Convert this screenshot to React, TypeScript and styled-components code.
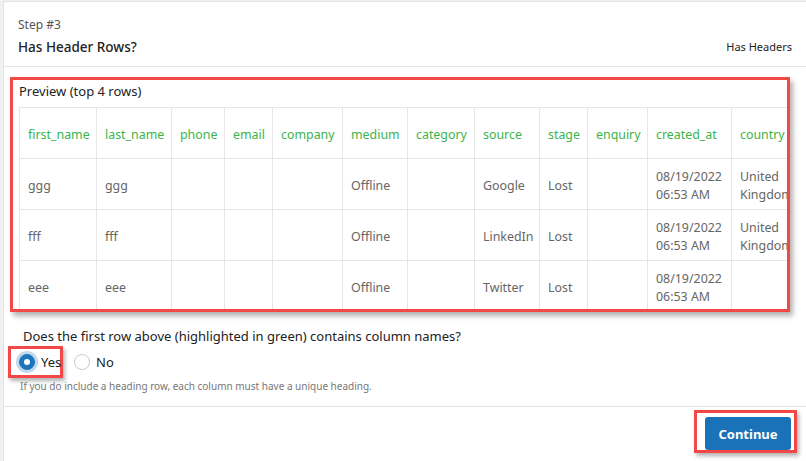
import React from "react";
import styled, { createGlobalStyle } from "styled-components";

const Global = createGlobalStyle`
  html, body { margin: 0; padding: 0; }
  body {
    background: #f1f1f1;
    font-family: "Noto Sans", "Open Sans", Arial, sans-serif;
    overflow: hidden;
  }
`;

const Card = styled.div`
  margin: 1px 0 0 3px;
  height: 460px;
  background: #fff;
  border-top: 1px solid #e4e4e4;
  border-left: 1px solid #e4e4e4;
  box-sizing: border-box;
  display: flex;
  flex-direction: column;
`;

const Header = styled.div`
  display: flex;
  justify-content: space-between;
  align-items: flex-end;
  padding: 13px 14px 10px 14px;
  border-bottom: 1px solid #e4e4e4;
  height: 65px;
  box-sizing: border-box;
`;

const TitleBlock = styled.div`
  display: flex;
  flex-direction: column;
  gap: 4px;
`;

const StepLabel = styled.div`
  font-size: 12px;
  line-height: 18px;
  color: #555;
`;

const Title = styled.div`
  font-size: 13.5px;
  line-height: 18px;
  color: #222;
  font-weight: 500;
`;

const HeaderNote = styled.div`
  font-size: 11px;
  line-height: 14px;
  color: #222;
  margin-bottom: 2px;
`;

const Body = styled.div`
  padding: 10px 0 0 6px;
  flex: 0 0 auto;
  height: 340px;
  box-sizing: border-box;
  border-bottom: 1px solid #e4e4e4;
`;

const Highlight = styled.div`
  border: 3px solid #f24848;
  box-shadow: 3px 4px 5px rgba(0, 0, 0, 0.3);
  width: 780px;
  height: 235px;
  box-sizing: border-box;
  overflow: hidden;
  padding: 2px 0 0 6px;
`;

const PreviewLabel = styled.div`
  font-size: 13px;
  line-height: 18px;
  color: #222;
  margin-bottom: 7px;
`;

const Table = styled.table`
  border-collapse: collapse;
  table-layout: fixed;
  width: 792px;
`;

const Th = styled.th`
  border: 1px solid #e6e6e6;
  height: 47px;
  padding: 3px 7px 0 8px;
  text-align: left;
  font-weight: 400;
  font-size: 12.4px;
  line-height: 18px;
  color: #3cb44b;
  vertical-align: middle;
  white-space: nowrap;
  overflow: hidden;
`;

const Td = styled.td`
  border: 1px solid #e6e6e6;
  height: 47px;
  padding: 3px 0 0 8px;
  font-size: 12.4px;
  line-height: 18px;
  color: #666;
  vertical-align: middle;
  white-space: pre-line;
  overflow: hidden;
`;

const Question = styled.div`
  font-size: 13px;
  line-height: 18px;
  color: #222;
  margin: 15px 0 0 13px;
`;

const RadioRow = styled.div`
  display: flex;
  align-items: center;
  margin: 1px 0 0 -2px;
  height: 32px;
`;

const Annotated = styled.div`
  border: 3px solid #f24848;
  box-shadow: 2px 3px 4px rgba(0, 0, 0, 0.3);
  box-sizing: border-box;
  width: 55px;
  height: 32px;
  display: flex;
  align-items: center;
`;

const RadioOption = styled.label<{ $gap?: number }>`
  display: flex;
  align-items: center;
  gap: 6px;
  padding: 0 0 0 ${(p) => p.$gap ?? 0}px;
  font-size: 13px;
  color: #222;
`;

const RadioCircle = styled.span<{ $checked?: boolean }>`
  width: 16px;
  height: 16px;
  border-radius: 50%;
  box-sizing: border-box;
  display: inline-flex;
  align-items: center;
  justify-content: center;
  background: ${(p) => (p.$checked ? "#1d75bc" : "#fff")};
  border: 1px solid ${(p) => (p.$checked ? "#1d75bc" : "#c9c9c9")};
  box-shadow: ${(p) => (p.$checked ? "0 0 0 3px rgba(29, 117, 188, 0.28)" : "none")};
  &::after {
    content: "";
    display: ${(p) => (p.$checked ? "block" : "none")};
    width: 6px;
    height: 6px;
    border-radius: 50%;
    background: #fff;
  }
`;

const Help = styled.div`
  font-size: 10px;
  line-height: 14px;
  color: #777;
  margin: 1px 0 0 10px;
`;

const Footer = styled.div`
  display: flex;
  justify-content: flex-end;
  padding: 3px 9px 0 0;
`;

const ButtonFrame = styled.div`
  border: 3px solid #f24848;
  box-shadow: 2px 3px 4px rgba(0, 0, 0, 0.3);
  padding: 4px 3px 0 8px;
  width: 103px;
  height: 43px;
  box-sizing: border-box;
`;

const Button = styled.button`
  width: 86px;
  height: 33px;
  background: #1a73b8;
  color: #fff;
  border: none;
  border-radius: 3px;
  font-family: inherit;
  font-weight: 700;
  font-size: 13px;
  padding: 0;
  cursor: pointer;
`;

const cols = [77, 75, 53, 48, 70, 65, 67, 65, 48, 60, 84, 80, 80];
const headers = [
  "first_name",
  "last_name",
  "phone",
  "email",
  "company",
  "medium",
  "category",
  "source",
  "stage",
  "enquiry",
  "created_at",
  "country",
  "city",
];
const date = "08/19/2022\n06:53 AM";
const rows = [
  ["ggg", "ggg", "", "", "", "Offline", "", "Google", "Lost", "", date, "United\nKingdom", ""],
  ["fff", "fff", "", "", "", "Offline", "", "LinkedIn", "Lost", "", date, "United\nKingdom", ""],
  ["eee", "eee", "", "", "", "Offline", "", "Twitter", "Lost", "", date, "", ""],
];

export default function App() {
  return (
    <>
      <Global />
      <Card>
        <Header>
          <TitleBlock>
            <StepLabel>Step #3</StepLabel>
            <Title>Has Header Rows?</Title>
          </TitleBlock>
          <HeaderNote>Has Headers</HeaderNote>
        </Header>
        <Body>
          <Highlight>
            <PreviewLabel>Preview (top 4 rows)</PreviewLabel>
            <Table>
              <colgroup>
                {cols.map((w, i) => (
                  <col key={i} style={{ width: w }} />
                ))}
              </colgroup>
              <thead>
                <tr>
                  {headers.map((h) => (
                    <Th key={h}>{h}</Th>
                  ))}
                </tr>
              </thead>
              <tbody>
                {rows.map((r, i) => (
                  <tr key={i}>
                    {r.map((c, j) => (
                      <Td key={j}>{c}</Td>
                    ))}
                  </tr>
                ))}
              </tbody>
            </Table>
          </Highlight>
          <Question>
            Does the first row above (highlighted in green) contains column names?
          </Question>
          <RadioRow>
            <Annotated>
              <RadioOption $gap={8}>
                <RadioCircle $checked />
                Yes
              </RadioOption>
            </Annotated>
            <RadioOption $gap={11}>
              <RadioCircle />
              No
            </RadioOption>
          </RadioRow>
          <Help>If you do include a heading row, each column must have a unique heading.</Help>
        </Body>
        <Footer>
          <ButtonFrame>
            <Button>Continue</Button>
          </ButtonFrame>
        </Footer>
      </Card>
    </>
  );
}
